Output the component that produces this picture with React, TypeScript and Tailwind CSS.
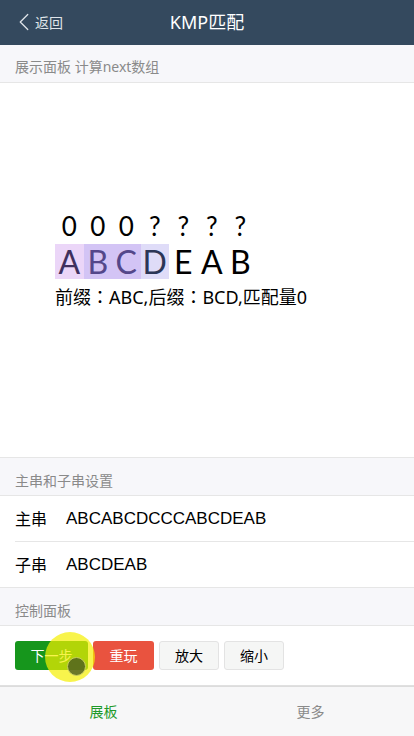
import { ChevronLeft } from "lucide-react"

const top = ["0", "0", "0", "?", "?", "?", "?"]
const bottom = [
  { ch: "A", cls: "bg-[#ebd6f8] text-[#40305e]" },
  { ch: "B", cls: "bg-[#d3c4f5] text-[#54478a]" },
  { ch: "C", cls: "bg-[#d3c4f5] text-[#54478a]" },
  { ch: "D", cls: "bg-[#dfdcf8] text-[#2c3656]" },
  { ch: "E", cls: "text-black" },
  { ch: "A", cls: "text-black" },
  { ch: "B", cls: "text-black" },
]

const colonFont = { fontFamily: '"Noto Sans CJK TC", sans-serif' }

function SectionTitle({ children }: { children: React.ReactNode }) {
  return (
    <div className="flex h-[38px] items-center border-b border-[#e6e6e6] bg-[#f7f7fa] px-[15px] pt-[7px] text-[14px] text-[#8a8a8a]">
      {children}
    </div>
  )
}

export default function App() {
  return (
    <div
      className="relative flex h-[736px] w-[414px] flex-col overflow-hidden bg-[#f7f7fa]"
      style={{ fontFamily: '"Noto Sans", "Noto Sans CJK SC", sans-serif' }}
    >
      <header className="relative flex h-[45px] items-center justify-center bg-[#34495e]">
        <div className="absolute left-[9px] top-0 flex h-full items-center text-[14px] text-[#dfe4e9]">
          <ChevronLeft size={30} strokeWidth={1} />
          <span className="-ml-[4px]">返回</span>
        </div>
        <p className="text-[18px] text-white">KMP匹配</p>
      </header>

      <SectionTitle>展示面板 计算next数组</SectionTitle>

      <main className="flex h-[375px] flex-col bg-white pl-[55px] pt-[129px]">
        <div className="flex font-['Lato',sans-serif] text-[26px] leading-[28px] text-black">
          {top.map((c, i) => (
            <span key={i} className="w-[28.5px] text-center">
              {c}
            </span>
          ))}
        </div>
        <div className="mt-[4px] flex font-['Lato',sans-serif] text-[32px] leading-[35px]">
          {bottom.map((b, i) => (
            <span key={i} className={`w-[28.5px] text-center ${b.cls}`}>
              {b.ch}
            </span>
          ))}
        </div>
        <p className="mt-[5px] text-[18px] leading-[24px] text-black">
          前缀<span style={colonFont}>：</span>ABC,后缀<span style={colonFont}>：</span>BCD,匹配量0
        </p>
      </main>

      <div className="border-t border-[#e6e6e6]">
        <SectionTitle>主串和子串设置</SectionTitle>
      </div>
      <div className="border-b border-[#e6e6e6] bg-white pl-[15px] text-[16px] text-black">
        <div className="flex h-[46px] items-center gap-[19px] border-b border-[#e6e6e6]">
          <span>主串</span>
          <span className="text-[17px]" style={{ fontFamily: '"Liberation Sans", sans-serif' }}>
            ABCABCDCCCABCDEAB
          </span>
        </div>
        <div className="flex h-[45px] items-center gap-[19px]">
          <span>子串</span>
          <span className="text-[17px]" style={{ fontFamily: '"Liberation Sans", sans-serif' }}>
            ABCDEAB
          </span>
        </div>
      </div>

      <SectionTitle>控制面板</SectionTitle>
      <div className="flex h-[60px] items-center gap-[5px] border-b border-[#e0e0e0] bg-white px-[15px] text-[14px]">
        <button className="h-[29px] w-[73px] rounded-[3px] bg-[#16961c] text-white">下一步</button>
        <button className="h-[29px] w-[61px] rounded-[3px] bg-[#e9533f] text-white">重玩</button>
        <button className="h-[29px] w-[60px] rounded-[3px] border border-[#e3e3e3] bg-[#f5f6f5] text-black">放大</button>
        <button className="h-[29px] w-[60px] rounded-[3px] border border-[#e3e3e3] bg-[#f5f6f5] text-black">缩小</button>
      </div>

      <nav className="mt-auto flex h-[50px] items-center border-t border-[#dcdcdc] bg-[#f7f7f8] text-[14px]">
        <span className="w-1/2 text-center text-[#1f9a2a]">展板</span>
        <span className="w-1/2 text-center text-[#8a8a8a]">更多</span>
      </nav>

      <div className="pointer-events-none absolute left-[45px] top-[632px] h-[50px] w-[50px] rounded-full bg-[#f5f000]/70" />
      <div className="pointer-events-none absolute left-[67px] top-[657px] h-[19px] w-[19px] rounded-full border border-[#c9cc60] bg-[#4a5a20]/80" />
    </div>
  )
}
